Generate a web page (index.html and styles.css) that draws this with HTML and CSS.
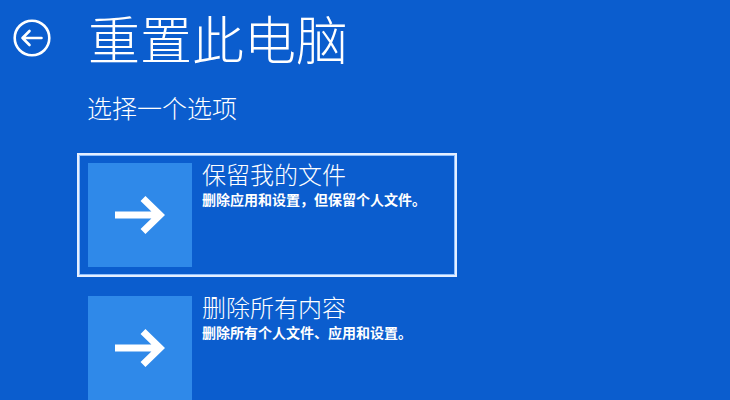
FILE: index.html
```html
<!DOCTYPE html>
<html lang="zh-CN">
<head>
<meta charset="utf-8">
<title>重置此电脑</title>
<link rel="stylesheet" href="styles.css">
</head>
<body>
<div class="page">
  <header class="header">
    <svg class="back" width="38" height="38" viewBox="0 0 38 38" aria-label="返回">
      <circle cx="19" cy="19" r="17.3" fill="none" stroke="#fff" stroke-width="2.6"/>
      <path d="M9.5 19 H28.5 M16.5 12 L9.5 19 L16.5 26" fill="none" stroke="#fff" stroke-width="2.6" stroke-linecap="round" stroke-linejoin="round"/>
    </svg>
    <h1 class="title">重置此电脑</h1>
  </header>
  <p class="subtitle">选择一个选项</p>
  <div class="options">
    <div class="option selected">
      <div class="tile">
        <svg width="50" height="38" viewBox="0 0 50 38"><path d="M0 19 H45 M28 2.5 L45 19 L28 35.5" fill="none" stroke="#fff" stroke-width="7"/></svg>
      </div>
      <div class="text">
        <div class="opt-title">保留我的文件</div>
        <div class="opt-desc">删除应用和设置，但保留个人文件。</div>
      </div>
    </div>
    <div class="option">
      <div class="tile">
        <svg width="50" height="38" viewBox="0 0 50 38"><path d="M0 19 H45 M28 2.5 L45 19 L28 35.5" fill="none" stroke="#fff" stroke-width="7"/></svg>
      </div>
      <div class="text">
        <div class="opt-title">删除所有内容</div>
        <div class="opt-desc">删除所有个人文件、应用和设置。</div>
      </div>
    </div>
  </div>
</div>
</body>
</html>
```
FILE: styles.css
```css
html, body {
  margin: 0;
  padding: 0;
  height: 100%;
  overflow: hidden;
}
body {
  background: #0b5dce;
  color: #fff;
  font-family: "Noto Sans CJK SC", "Noto Sans", sans-serif;
}
.page {
  padding-top: 12px;
}
.header {
  display: flex;
  align-items: center;
  height: 52px;
}
.back {
  margin-left: 13px;
  flex: none;
}
.title {
  margin: 0 0 0 37px;
  font-size: 52px;
  line-height: 52px;
  font-weight: 200;
}
.subtitle {
  margin: 31px 0 0 87px;
  font-size: 25px;
  line-height: 25px;
  font-weight: 300;
}
.options {
  margin: 33px 0 0 77px;
  width: 380px;
  display: flex;
  flex-direction: column;
  gap: 9px;
}
.option {
  display: flex;
  gap: 10px;
  padding: 8px 9px;
  border: 2px solid transparent;
}
.option.selected {
  border-color: #e6efff;
  box-shadow: inset 0 0 0 1px #8fc0ff;
}
.tile {
  width: 104px;
  height: 104px;
  flex: none;
  background: #2f89e9;
  display: flex;
  align-items: center;
  justify-content: center;
}
.text {
  display: flex;
  flex-direction: column;
}
.opt-title {
  margin-top: -1px;
  font-size: 24px;
  line-height: 24px;
  font-weight: 300;
}
.opt-desc {
  margin-top: 5px;
  font-size: 14px;
  line-height: 16px;
  font-weight: 700;
}
```
